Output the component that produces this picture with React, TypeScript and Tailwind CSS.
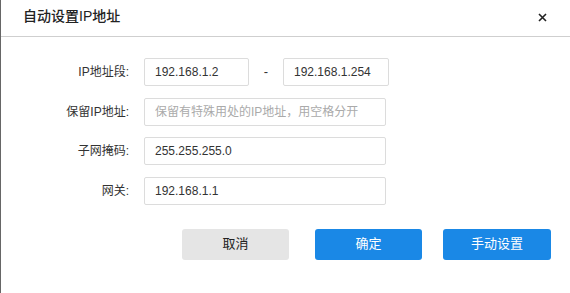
const font = { fontFamily: '"Liberation Sans", "Noto Sans CJK SC", sans-serif' };

const Field = ({ label, children }: { label: string; children: React.ReactNode }) => (
  <div className="flex items-center h-[28px]">
    <label className="w-[128px] text-right text-[12px] text-[#333]">{label}</label>
    <div className="ml-[15px] flex items-center">{children}</div>
  </div>
);

const inputCls =
  "h-[28px] border border-[#dcdcdc] rounded-[2px] px-[10px] text-[12px] text-[#333] outline-none placeholder:text-[#aaa] bg-white";

const App = () => {
  return (
    <div className="w-[570px] h-[293px] bg-white border-l border-[#666]" style={font}>
      {/* Header */}
      <div className="h-[37px] flex items-center justify-between border-b border-[#cfcfcf] pl-[22px] pr-[23px]">
        <h1 className="text-[14px] font-medium text-[#222] -mt-[3px]">自动设置IP地址</h1>
        <svg width="9" height="9" viewBox="0 0 9 9" className="-mt-[1px]">
          <path d="M1 1L8 8M8 1L1 8" stroke="#222" strokeWidth="1.6" />
        </svg>
      </div>

      <div className="pt-[21px] flex flex-col gap-[11.5px]">
        <Field label="IP地址段:">
          <input className={`${inputCls} w-[105px]`} defaultValue="192.168.1.2" />
          <span className="w-[34px] text-center text-[13px] text-[#333]">-</span>
          <input className={`${inputCls} w-[106px]`} defaultValue="192.168.1.254" />
        </Field>
        <Field label="保留IP地址:">
          <input className={`${inputCls} w-[242px]`} placeholder="保留有特殊用处的IP地址，用空格分开" />
        </Field>
        <Field label="子网掩码:">
          <input className={`${inputCls} w-[242px]`} defaultValue="255.255.255.0" />
        </Field>
        <Field label="网关:">
          <input className={`${inputCls} w-[242px]`} defaultValue="192.168.1.1" />
        </Field>
      </div>

      <div className="flex justify-end pr-[19px] mt-[24px]">
        <button className="w-[107px] h-[31px] rounded-[3px] bg-[#e5e5e5] text-[13px] text-[#222]">取消</button>
        <button className="ml-[26px] w-[107px] h-[31px] rounded-[3px] bg-[#1a88e6] text-[13px] text-white">确定</button>
        <button className="ml-[21px] w-[108px] h-[31px] rounded-[3px] bg-[#1a88e6] text-[13px] text-white">手动设置</button>
      </div>
    </div>
  );
};

export default App;
